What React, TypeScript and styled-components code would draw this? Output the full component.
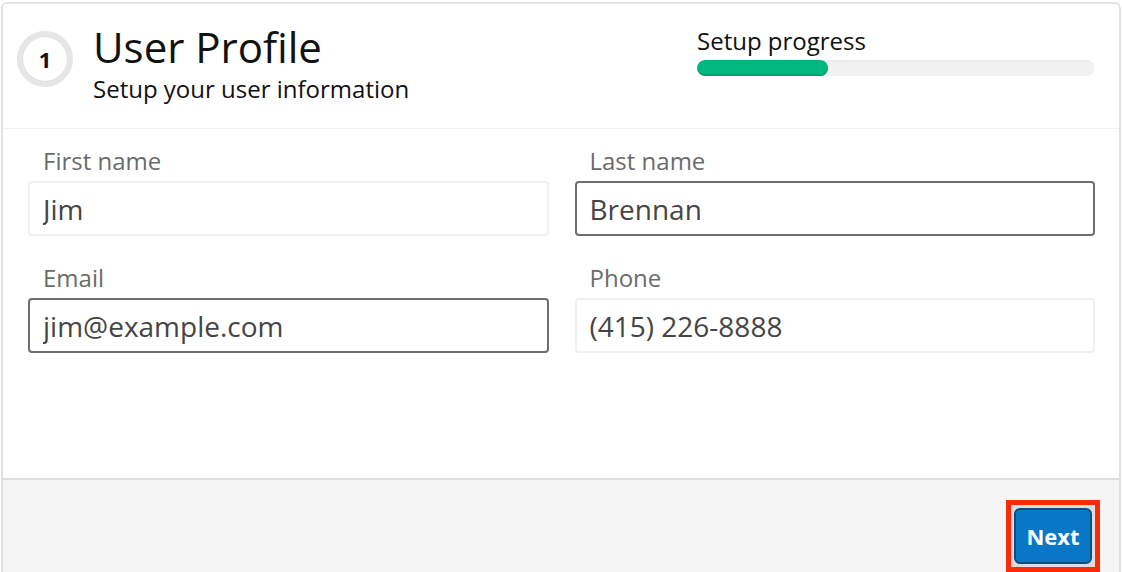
import * as React from 'react';
import styled, { createGlobalStyle } from 'styled-components';

const GlobalStyle = createGlobalStyle`
  html, body {
    margin: 0;
    padding: 0;
    background: #ffffff;
    font-family: 'Open Sans', 'Noto Sans', sans-serif;
  }
  * {
    box-sizing: border-box;
  }
`;

const Card = styled.div`
  margin: 2px 1px 0 1px;
  width: 1120px;
  border: 2px solid #e2e2e2;
  border-radius: 6px;
  overflow: hidden;
  background: #ffffff;
`;

const Header = styled.header`
  display: flex;
  justify-content: space-between;
  align-items: flex-start;
  height: 125px;
  padding: 19px 25px 0 14px;
  border-bottom: 1px solid #f1f1f1;
`;

const TitleGroup = styled.div`
  display: flex;
  align-items: flex-start;
  gap: 20px;
`;

const StepBadge = styled.div`
  display: flex;
  align-items: center;
  justify-content: center;
  width: 56px;
  height: 56px;
  margin-top: 8px;
  border-radius: 50%;
  border: 5px solid #e6e6e6;
  box-shadow: inset 0 0 0 1px #d9d9d9;
  font-size: 22px;
  font-weight: 700;
  color: #111111;
`;

const TitleText = styled.div`
  display: flex;
  flex-direction: column;
`;

const Title = styled.h1`
  margin: 0;
  font-size: 42px;
  line-height: 48px;
  font-weight: 400;
  color: #111111;
`;

const Subtitle = styled.p`
  margin: 4px 0 0 0;
  font-size: 24px;
  line-height: 28px;
  color: #111111;
`;

const Progress = styled.div`
  width: 397px;
  margin-top: 4px;
`;

const ProgressLabel = styled.div`
  font-size: 24px;
  line-height: 28px;
  color: #111111;
`;

const Track = styled.div`
  margin-top: 5px;
  height: 16px;
  border-radius: 8px;
  background: #f1f1f1;
  box-shadow: inset 0 1px 2px rgba(0, 0, 0, 0.05);
  overflow: hidden;
`;

const Fill = styled.div`
  height: 100%;
  border-radius: 8px;
  background: #00b87f;
  box-shadow: inset 0 -2px 0 #00a26f;
`;

const Body = styled.div`
  height: 349px;
  padding: 19px 24px 0 25px;
  display: grid;
  grid-template-columns: 1fr 1fr;
  column-gap: 26px;
  row-gap: 29px;
  align-content: start;
`;

const Field = styled.label`
  display: flex;
  flex-direction: column;
`;

const FieldLabel = styled.span`
  padding-left: 15px;
  font-size: 24px;
  line-height: 26px;
  color: #6b6b6b;
`;

const Input = styled.input<{ $active?: boolean }>`
  margin-top: 7px;
  height: 55px;
  width: 100%;
  padding: 0 13px;
  border: 2px solid ${({ $active }) => ($active ? '#6e6e6e' : '#f0f0f0')};
  border-radius: 4px;
  background: #ffffff;
  font-family: 'Open Sans', 'Noto Sans', sans-serif;
  font-size: 28px;
  color: #454545;
  outline: none;
`;

const Footer = styled.footer`
  display: flex;
  justify-content: flex-end;
  height: 120px;
  padding: 20px 19px 0 0;
  border-top: 2px solid #dedede;
  background: #f5f5f5;
`;

const Highlight = styled.div`
  align-self: flex-start;
  padding: 3px;
  border: 5px solid #f92a07;
  background: #dcdcdc;
`;

const NextButton = styled.button`
  display: block;
  width: 78px;
  height: 56px;
  border: 2px solid #0b4e84;
  border-radius: 6px;
  background: #0878c6;
  color: #ffffff;
  font-family: 'Open Sans', 'Noto Sans', sans-serif;
  font-size: 22px;
  font-weight: 700;
  cursor: pointer;
`;

const fields = [
  { label: 'First name', value: 'Jim', active: false },
  { label: 'Last name', value: 'Brennan', active: true },
  { label: 'Email', value: 'jim@example.com', active: true },
  { label: 'Phone', value: '(415) 226-8888', active: false },
];

export default function App() {
  const progress = 33;
  return (
    <>
      <GlobalStyle />
      <Card>
        <Header>
          <TitleGroup>
            <StepBadge>1</StepBadge>
            <TitleText>
              <Title>User Profile</Title>
              <Subtitle>Setup your user information</Subtitle>
            </TitleText>
          </TitleGroup>
          <Progress>
            <ProgressLabel>Setup progress</ProgressLabel>
            <Track>
              <Fill style={{ width: `${progress}%` }} />
            </Track>
          </Progress>
        </Header>
        <Body>
          {fields.map((f) => (
            <Field key={f.label}>
              <FieldLabel>{f.label}</FieldLabel>
              <Input readOnly value={f.value} $active={f.active} />
            </Field>
          ))}
        </Body>
        <Footer>
          <Highlight>
            <NextButton>Next</NextButton>
          </Highlight>
        </Footer>
      </Card>
    </>
  );
}
